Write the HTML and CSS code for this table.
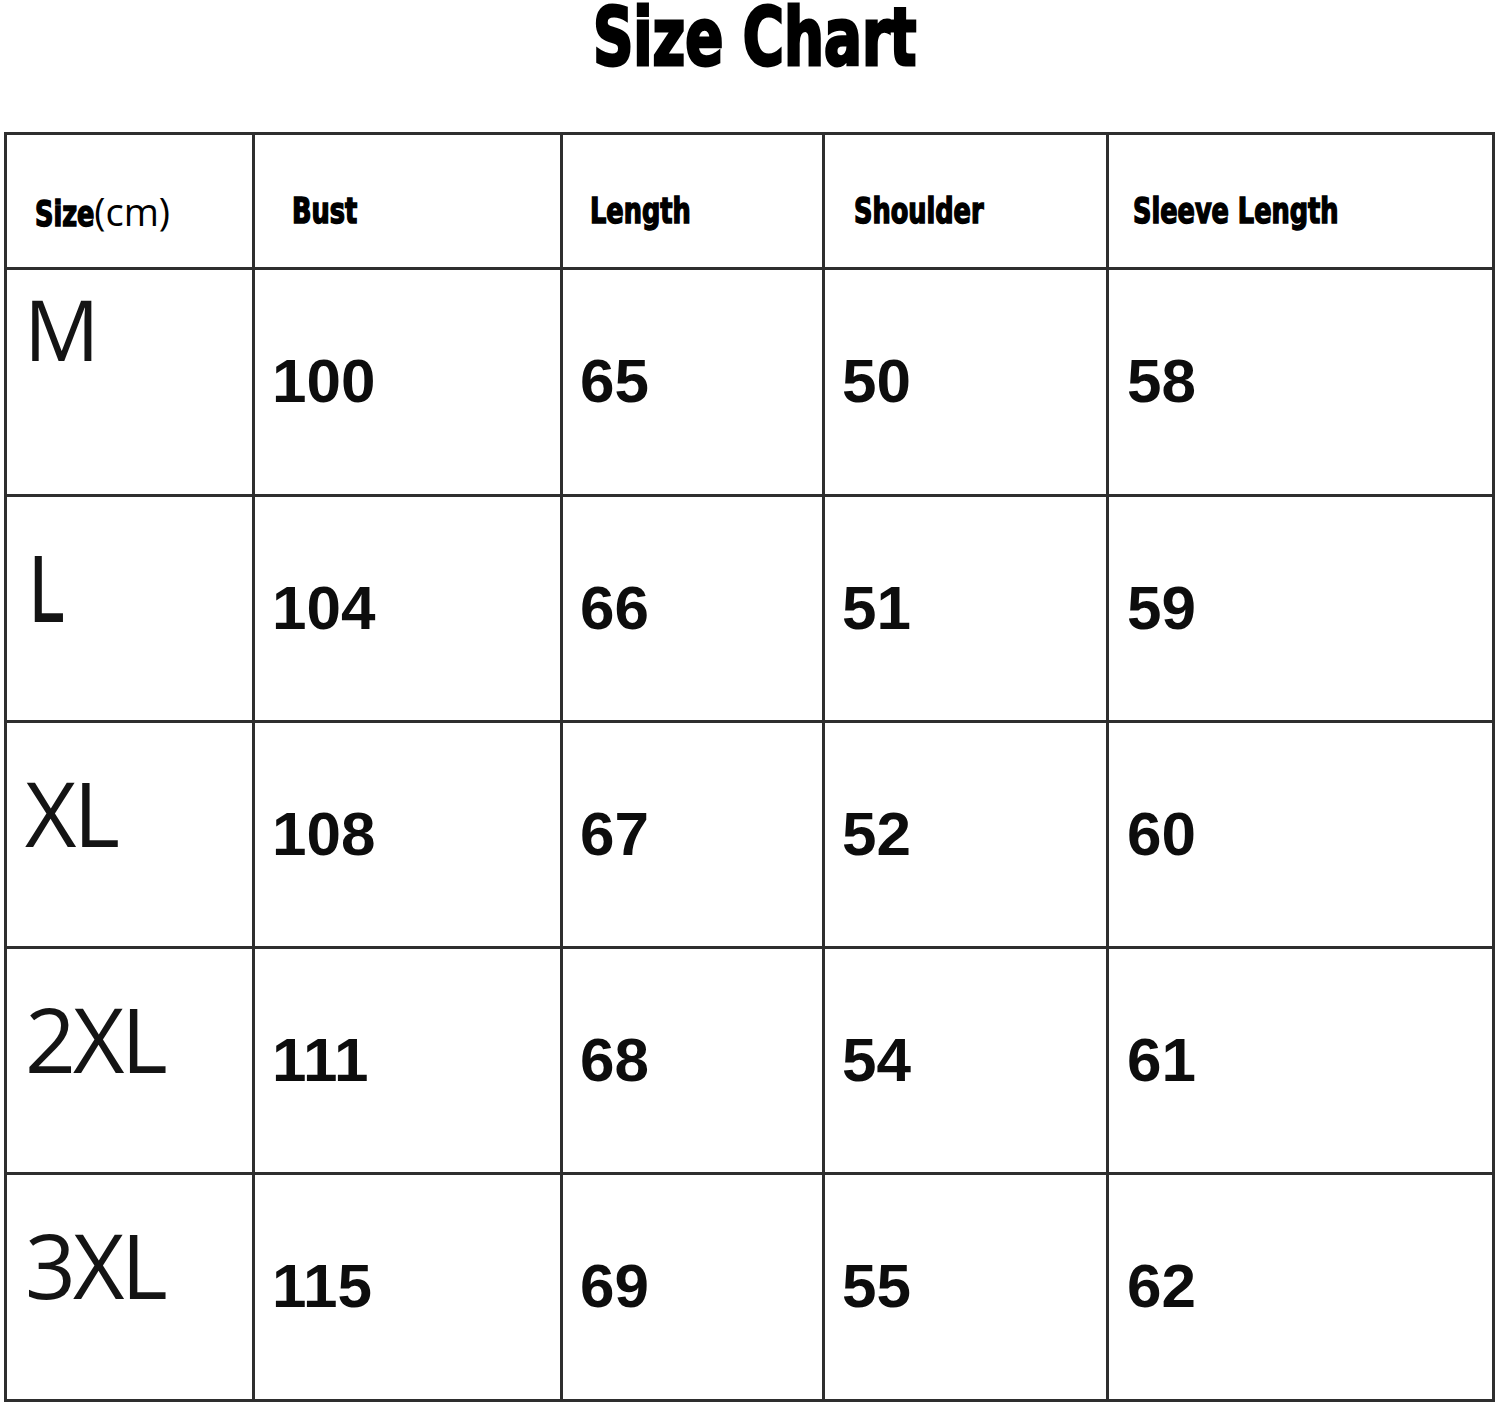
FILE: index.html
```html
<!DOCTYPE html>
<html lang="en">
<head>
<meta charset="utf-8">
<title>Size Chart</title>
<link rel="stylesheet" href="styles.css">
</head>
<body>
<main class="page">
  <h1 class="title">Size Chart</h1>
  <div class="chart">
    <div class="cell head c1"><span class="heavy heavy-size">Size</span><span class="unit">(cm)</span></div>
    <div class="cell head c2"><span class="heavy">Bust</span></div>
    <div class="cell head c3"><span class="heavy">Length</span></div>
    <div class="cell head c4"><span class="heavy">Shoulder</span></div>
    <div class="cell head c5"><span class="heavy">Sleeve Length</span></div>

    <div class="cell size size-m">M</div>
    <div class="cell num c2">100</div>
    <div class="cell num c3">65</div>
    <div class="cell num c4">50</div>
    <div class="cell num c5">58</div>

    <div class="cell size"><span class="narrow-l">L</span></div>
    <div class="cell num c2">104</div>
    <div class="cell num c3">66</div>
    <div class="cell num c4">51</div>
    <div class="cell num c5">59</div>

    <div class="cell size">XL</div>
    <div class="cell num c2">108</div>
    <div class="cell num c3">67</div>
    <div class="cell num c4">52</div>
    <div class="cell num c5">60</div>

    <div class="cell size">2XL</div>
    <div class="cell num c2">111</div>
    <div class="cell num c3">68</div>
    <div class="cell num c4">54</div>
    <div class="cell num c5">61</div>

    <div class="cell size">3XL</div>
    <div class="cell num c2">115</div>
    <div class="cell num c3">69</div>
    <div class="cell num c4">55</div>
    <div class="cell num c5">62</div>
  </div>
</main>
</body>
</html>
```

FILE: styles.css
```css
html, body {
  margin: 0;
  padding: 0;
  background: #ffffff;
}

.page {
  width: 1500px;
  color: #000;
}

.title {
  margin: 0 0 56px 0;
  height: 76px;
  line-height: 76px;
  font-family: "DejaVu Sans Condensed", "DejaVu Sans", sans-serif;
  font-stretch: condensed;
  font-weight: 700;
  font-size: 80px;
  text-align: center;
  padding-left: 12px;
  -webkit-text-stroke: 3px #000;
  transform: scaleX(0.78);
}

.chart {
  margin-left: 4px;
  width: 1491px;
  box-sizing: border-box;
  display: grid;
  grid-template-columns: 245px 305px 259px 281px 383px;
  grid-template-rows: 132px 224px 223px 223px 223px 224px;
  gap: 3px;
  padding: 3px;
  background: #2e2e2e;
}

.cell {
  background: #fff;
  box-sizing: border-box;
  white-space: nowrap;
}

.head {
  padding-top: 58px;
  font-size: 36px;
  line-height: 36px;
}

.heavy {
  display: inline-block;
  font-family: "DejaVu Sans Condensed", "DejaVu Sans", sans-serif;
  font-stretch: condensed;
  font-weight: 700;
  -webkit-text-stroke: 1.5px #000;
  transform: scaleX(0.79);
  transform-origin: left center;
}

.heavy-size {
  margin-right: -16px;
}

.unit {
  font-family: "Open Sans", "Liberation Sans", sans-serif;
  font-weight: 400;
  font-size: 38px;
}

.head.c1 { padding-left: 28px; }
.head.c2 { padding-left: 37px; }
.head.c3 { padding-left: 27px; }
.head.c4 { padding-left: 29px; }
.head.c5 { padding-left: 24px; }

.size {
  font-family: "Open Sans", "Liberation Sans", sans-serif;
  font-weight: 400;
  font-size: 89px;
  line-height: 89px;
  letter-spacing: -3px;
  padding-top: 45px;
  padding-left: 18px;
  color: #141414;
}

.size-m {
  font-size: 84px;
  line-height: 84px;
  letter-spacing: 0;
  padding-top: 17px;
  padding-left: 17px;
}

.narrow-l {
  display: inline-block;
  font-weight: 400;
  -webkit-text-stroke: 2px #141414;
  transform: scaleX(0.75);
  transform-origin: left center;
  margin-left: 4px;
}

.num {
  font-family: "Liberation Sans", Arial, sans-serif;
  font-weight: 700;
  font-size: 62px;
  line-height: 62px;
  padding-top: 80px;
  padding-left: 17px;
  color: #0d0d0d;
}

.num.c5 { padding-left: 18px; }
```
